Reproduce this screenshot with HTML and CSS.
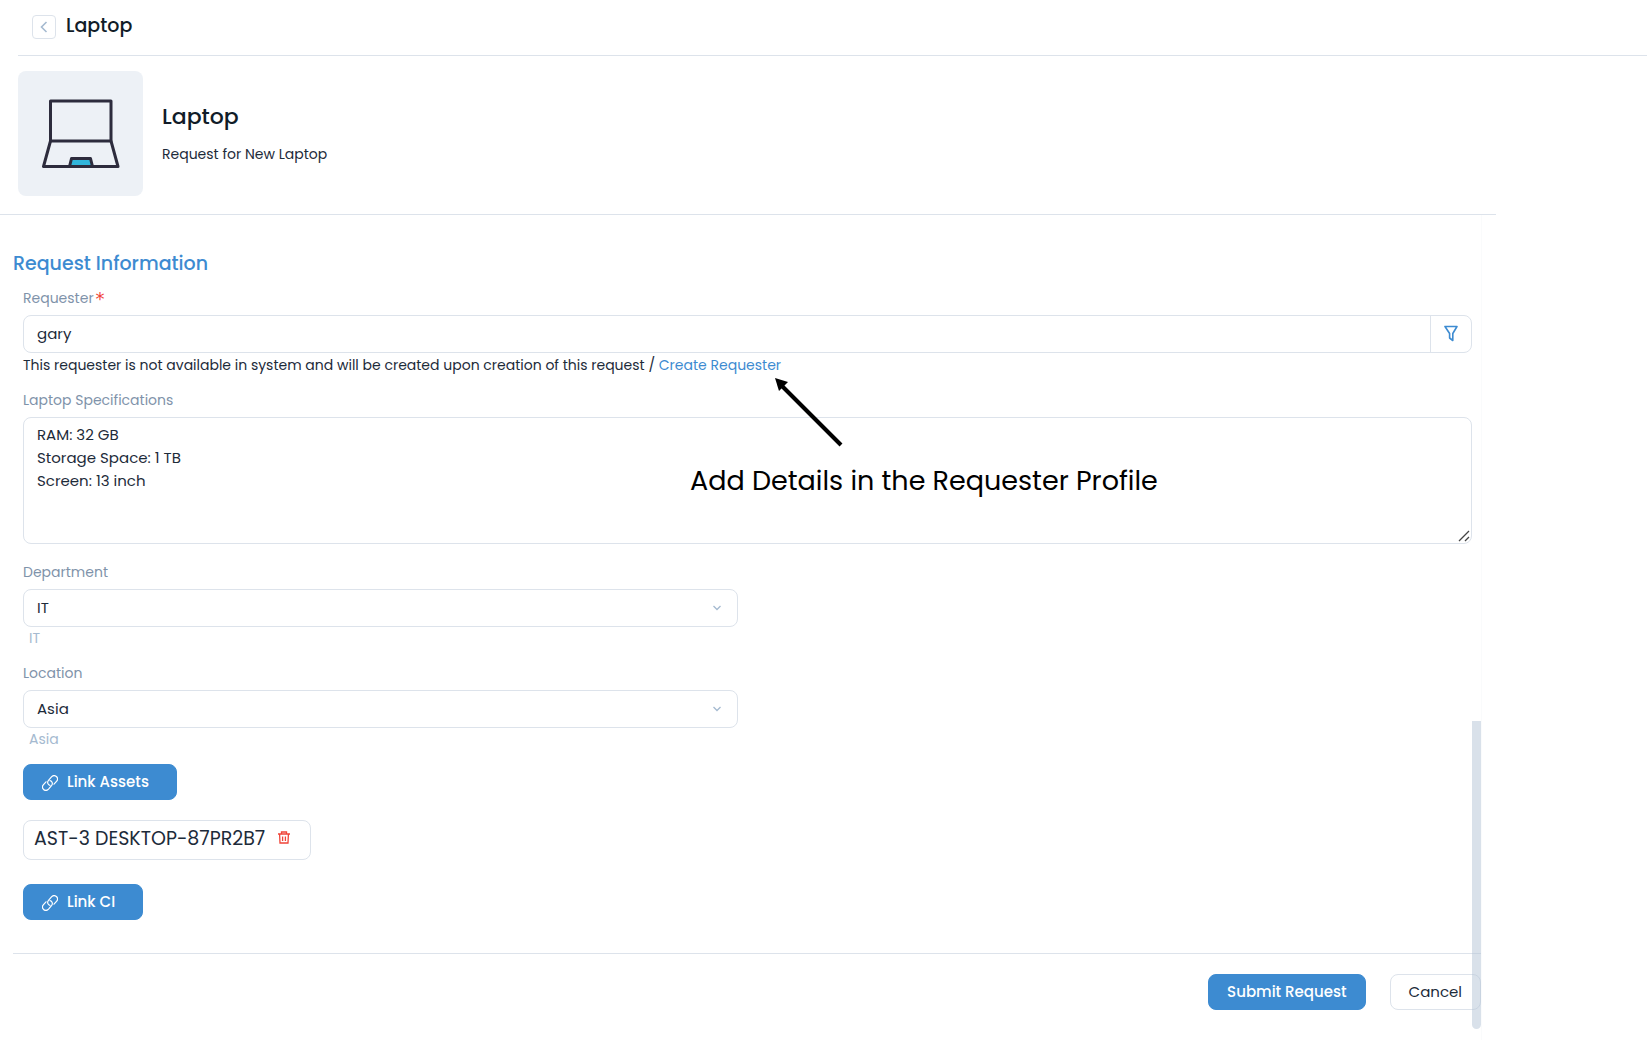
FILE: index.html
```html
<!DOCTYPE html>
<html lang="en">
<head>
<meta charset="utf-8">
<meta name="viewport" content="width=device-width, initial-scale=1">
<title>Laptop</title>
<link rel="stylesheet" href="styles.css">
</head>
<body>
<svg class="sprite" aria-hidden="true">
  <symbol id="link" viewBox="0 0 16 16">
    <g fill="none" stroke="currentColor" stroke-width="1.2" stroke-linecap="round" stroke-linejoin="round">
      <path d="M8 10.400C5.700 9.900 4.900 7.200 6.500 5.300L9.500 1.900C10.900 .4 13 .3 14.400 1.500C15.800 2.800 15.800 4.900 14.500 6.400L12 9.200"/>
      <path d="M8 5.600C10.300 6.100 11.100 8.800 9.500 10.700L6.500 14.100C5.100 15.600 3 15.700 1.600 14.500C.2 13.200 .2 11.100 1.500 9.600L4 6.800"/>
    </g>
  </symbol>
</svg>
<header class="topbar">
  <button class="back" type="button" aria-label="Back">
    <svg width="8" height="12" viewBox="0 0 8 12"><path d="M6.5 1L1.5 6L6.5 11" fill="none" stroke="#a5bad0" stroke-width="1.6"/></svg>
  </button>
  <h1 class="topbar-title">Laptop</h1>
</header>
<main class="page">
  <section class="service">
    <div class="service-icon">
      <svg width="78" height="70" viewBox="0 0 78 70">
        <g fill="none" stroke="#2d2c3d" stroke-width="3" stroke-linejoin="round">
          <path d="M8.500 2H69V42H8.500Z"/>
          <path d="M8.500 42L1.500 67.500H76L69 42"/>
          <path d="M27.500 67.500L29.500 59.500H48.500L50.500 67.500Z" fill="#30b5da"/>
        </g>
      </svg>
    </div>
    <div class="service-body">
      <h2 class="service-name">Laptop</h2>
      <p class="service-text">Request for New Laptop</p>
    </div>
  </section>
  <form class="request">
    <h2 class="section-title">Request Information</h2>
    <div class="fields">
      <div class="field">
        <label for="requester">Requester<span class="required">*</span></label>
        <div class="input-group">
          <input id="requester" type="text" value="gary">
          <button type="button" aria-label="Filter requesters">
            <svg width="14" height="17" viewBox="0 0 14 17"><path d="M1 1.500H13L8.800 8.500V15.500L5.600 13V8.500Z" fill="none" stroke="#3d8bd1" stroke-width="1.600" stroke-linejoin="round"/></svg>
          </button>
        </div>
        <p class="note">This requester is not available in system and will be created upon creation of this request / <a href="#create">Create Requester</a></p>
      </div>
      <div class="field specs">
        <label for="specs">Laptop Specifications</label>
        <textarea id="specs">RAM: 32 GB
Storage Space: 1 TB
Screen: 13 inch</textarea>
        <div class="callout">
          <svg class="arrow" width="70" height="70" viewBox="0 0 70 70"><path d="M7 8L66 67" stroke="#000" stroke-width="4"/><path d="M0 0L13 4L4 13Z"/></svg>
          <p>Add Details in the Requester Profile</p>
        </div>
      </div>
      <div class="field half">
        <label for="department">Department</label>
        <select id="department"><option>IT</option></select>
        <p class="hint">IT</p>
      </div>
      <div class="field half">
        <label for="location">Location</label>
        <select id="location"><option>Asia</option></select>
        <p class="hint">Asia</p>
      </div>
      <button class="btn primary link" type="button"><svg width="16" height="18" viewBox="0 0 16 18"><use href="#link" y="2" width="16" height="16"/></svg>Link Assets</button>
      <div class="asset">
        <span>AST-3 DESKTOP-87PR2B7</span>
        <button type="button" aria-label="Remove asset">
          <svg width="12" height="13" viewBox="0 0 12 13"><g fill="none" stroke="#f04438" stroke-width="1.300"><path d="M0 3H12M3.500 3V1H8.500V3M1.600 3L2 12H10L10.400 3M4.600 5.500V10M7.400 5.500V10"/></g></svg>
        </button>
      </div>
      <button class="btn primary link" type="button"><svg width="16" height="18" viewBox="0 0 16 18"><use href="#link" y="2" width="16" height="16"/></svg>Link CI</button>
    </div>
    <div class="actions">
      <button class="btn primary" type="submit">Submit Request</button>
      <button class="btn" type="button">Cancel</button>
    </div>
    <div class="scroll-thumb"></div>
  </form>
</main>
</body>
</html>
```
FILE: styles.css
```css
* { box-sizing: border-box; }
body {
  margin: 0;
  background: #fff;
  color: #1d2b3a;
  font: 14px/20px Poppins, Inter, "Open Sans", sans-serif;
}
h1, h2, p { margin: 0; font-weight: 500; }
p { font-weight: 400; }
button, input, select, textarea { font: inherit; color: inherit; }
button { padding: 0; cursor: pointer; }
svg { display: block; flex: none; }
.sprite { position: absolute; width: 0; height: 0; }

.topbar {
  display: flex;
  align-items: center;
  gap: 10px;
  height: 56px;
  margin-left: 18px;
  padding: 0 14px 2px;
  border-bottom: 1px solid #dde3eb;
}
.back {
  display: grid;
  place-items: center;
  width: 24px;
  height: 24px;
  background: #fff;
  border: 1px solid #dde3eb;
  border-radius: 4px;
}
.topbar-title { padding-bottom: 2px; font-size: 19px; line-height: 24px; color: #111c28; }

.page { margin-right: 151px; }
.service {
  display: flex;
  align-items: center;
  gap: 19px;
  padding: 15px 18px 18px;
  border-bottom: 1px solid #dde3eb;
}
.service-icon {
  display: grid;
  place-items: center;
  width: 125px;
  height: 125px;
  background: #edf1f6;
  border-radius: 8px;
}
.service-body { padding-bottom: 2px; }
.service-name { margin-bottom: 12px; font-size: 22px; line-height: 30px; color: #111c28; }

.request {
  position: relative;
  margin-right: 14px;
  padding: 34px 0 30px 13px;
  border-right: 1px solid #fafbfc;
}
.section-title { margin-bottom: 9px; font-size: 19px; line-height: 30px; color: #3d8bd1; }
.fields {
  display: flex;
  flex-direction: column;
  align-items: flex-start;
  padding: 0 9px 33px 10px;
}
.field { position: relative; width: 100%; margin-bottom: 13px; }
.half { width: calc(50% - 10px); }
.specs { margin-bottom: 18px; }
label { display: block; margin-bottom: 7px; color: #7f93aa; }
.required { margin-left: 2px; font: 18px/16px "DejaVu Sans", sans-serif; vertical-align: -2px; color: #f04438; }

.input-group {
  display: flex;
  height: 38px;
  border: 1px solid #dde3eb;
  border-radius: 8px;
}
.input-group input {
  flex: 1;
  min-width: 0;
  padding: 0 13px;
  border: 0;
  background: none;
  font-size: 15px;
}
.input-group button {
  display: grid;
  place-items: center;
  width: 41px;
  padding-bottom: 2px;
  background: none;
  border: 0;
  border-left: 1px solid #dde3eb;
}
.note { line-height: 24px; }
.note a { color: #3d8bd1; text-decoration: none; }
.hint { padding-left: 6px; line-height: 22px; color: #a5bad0; }
.half { margin-bottom: 14px; }
textarea {
  display: block;
  width: 100%;
  height: 127px;
  padding: 5px 13px;
  border: 1px solid #dde3eb;
  border-radius: 8px;
  font-size: 15px;
  line-height: 23px;
  resize: vertical;
}
textarea::-webkit-resizer {
  background: url("data:image/svg+xml,%3Csvg xmlns='http://www.w3.org/2000/svg' width='15' height='15'%3E%3Cpath d='M3 13L13 3M9 13L13 9' stroke='%23444' stroke-width='1.300'/%3E%3C/svg%3E") no-repeat;
}
select {
  display: block;
  width: 100%;
  height: 38px;
  padding: 0 13px;
  border: 1px solid #dde3eb;
  border-radius: 8px;
  appearance: none;
  font-size: 15px;
  background: #fff url("data:image/svg+xml,%3Csvg xmlns='http://www.w3.org/2000/svg' width='8' height='6'%3E%3Cpath d='M.5 1L4 4.500L7.500 1' fill='none' stroke='%23a5bad0' stroke-width='1.300'/%3E%3C/svg%3E") no-repeat right 16px center;
}

.callout { position: absolute; top: -12px; left: 667px; pointer-events: none; color: #000; }
.callout .arrow { margin-left: 85px; }
.callout p { margin-top: 15px; font-size: 27px; line-height: 36px; white-space: nowrap; }

.btn {
  display: flex;
  align-items: center;
  justify-content: center;
  height: 36px;
  padding: 0 18px;
  background: #fff;
  border: 1px solid #dde3eb;
  border-radius: 8px;
  font-size: 15px;
}
.primary { background: #3d8bd1; border-color: #3d8bd1; color: #fff; font-weight: 500; }
.link { gap: 9px; padding: 0 27px 0 18px; }
.asset {
  display: flex;
  align-items: center;
  gap: 13px;
  height: 40px;
  margin: 20px 0 24px;
  padding: 0 20px 2px 10px;
  border: 1px solid #dde3eb;
  border-radius: 8px;
  font-size: 19px;
}
.asset button { padding-bottom: 4px; background: none; border: 0; }
.actions {
  display: flex;
  justify-content: flex-end;
  gap: 24px;
  padding-top: 20px;
  border-top: 1px solid #dde3eb;
}
.scroll-thumb {
  position: absolute;
  right: 0;
  bottom: 11px;
  width: 9px;
  height: 308px;
  background: rgba(180, 196, 214, 0.5);
  border-radius: 0 0 5px 5px;
}
```
